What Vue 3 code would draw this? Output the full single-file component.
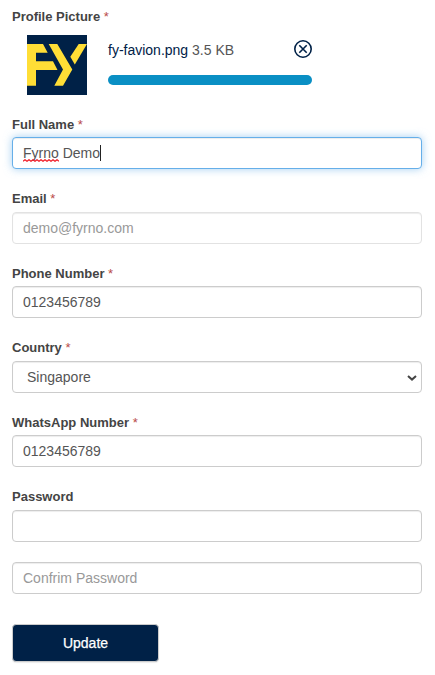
<template>
  <form class="profile" @submit.prevent>
    <label class="label">Profile Picture <span class="required">*</span></label>
    <div class="upload">
      <svg class="thumb" viewBox="0 0 60 60">
        <rect width="60" height="60" fill="#002147" />
        <g fill="#ffde36">
          <path d="M0 9H16L20.7 17.7H9V26.3H26L30.5 35H9V50.7H0Z" />
          <path d="M21.7 9H30.3L45.3 34.5L36 50.7H27.3L36 34.5Z" />
          <path d="M51.7 9H60L47.8 29.5L43.3 21.7Z" />
        </g>
      </svg>
      <div class="file">
        <div class="file-info">
          <p><span class="file-name">{{ file.name }}</span> {{ file.size }}</p>
          <svg class="remove" viewBox="0 0 18 18">
            <circle cx="9" cy="9" r="8.2" />
            <path d="M5.3 5.3L12.7 12.7M12.7 5.3L5.3 12.7" />
          </svg>
        </div>
        <div class="progress">
          <div class="bar" :style="{ width: file.progress + '%' }"></div>
        </div>
      </div>
    </div>

    <div class="group" v-for="field in fields" :key="field.label">
      <label class="label">{{ field.label }} <span class="required" v-if="field.required">*</span></label>
      <div class="control focused" v-if="field.type === 'name'">
        <span><span class="misspelled">Fyrno<svg class="squiggle" width="36" height="3" viewBox="0 0 36 3"><path :d="wave" /></svg></span> Demo</span><i class="caret"></i>
      </div>
      <div class="select" v-else-if="field.type === 'select'">
        <select class="control" v-model="field.value">
          <option>Singapore</option>
        </select>
        <svg class="arrow" viewBox="0 0 10 6"><path d="M1 1L5 4.6L9 1" /></svg>
      </div>
      <input
        v-else
        class="control"
        :type="field.type"
        v-model="field.value"
        :placeholder="field.placeholder"
        :disabled="field.disabled"
      >
    </div>

    <input class="control confirm" type="password" placeholder="Confrim Password">
    <button class="update">Update</button>
  </form>
</template>

<script setup>
import { reactive } from 'vue'

const file = reactive({ name: 'fy-favion.png', size: '3.5 KB', progress: 100 })

const fields = reactive([
  { label: 'Full Name', type: 'name', required: true },
  { label: 'Email', type: 'text', value: '', placeholder: 'demo@fyrno.com', required: true, disabled: true },
  { label: 'Phone Number', type: 'text', value: '0123456789', required: true },
  { label: 'Country', type: 'select', value: 'Singapore', required: true },
  { label: 'WhatsApp Number', type: 'text', value: '0123456789', required: true },
  { label: 'Password', type: 'password', value: '' },
])

// zigzag under a misspelled word
const wave = 'M0 2.3' + 'l2 -1.6l2 1.6'.repeat(9)
</script>

<style>
body {
  background: #fff;
}
</style>

<style scoped>
.profile {
  box-sizing: border-box;
  width: 435px;
  height: 675px;
  padding: 8px 13px 0 12px;
  overflow: hidden;
  font-family: "Liberation Sans", Arial, sans-serif;
  font-size: 14px;
  color: #555;
}

.label {
  display: block;
  height: 17px;
  line-height: 17px;
  font-size: 13px;
  font-weight: bold;
  color: #444;
}

.required {
  font-weight: normal;
  color: #b94a48;
}

.upload {
  display: flex;
  gap: 21px;
  height: 60px;
  margin: 10px 0 20.7px 15px;
}

.thumb {
  width: 60px;
  height: 60px;
}

.file {
  width: 204px;
}

.file-info {
  display: flex;
  justify-content: space-between;
  height: 30px;
  padding-top: 5px;
  box-sizing: border-box;
}

.file-info p {
  margin: 0;
  line-height: 20px;
}

.file-name {
  color: #002147;
}

.remove {
  width: 18px;
  height: 18px;
  fill: none;
  stroke: #002147;
  stroke-width: 1.6;
}

.progress {
  height: 10px;
  margin-top: 10px;
}

.bar {
  height: 10px;
  border-radius: 5px;
  background: #0a8fc4;
}

.group {
  height: 74.5px;
}

.group .control {
  margin-top: 4.5px;
}

.control {
  display: block;
  box-sizing: border-box;
  width: 410px;
  height: 32px;
  padding: 0 10px;
  border: 1px solid #ccc;
  border-radius: 4px;
  outline: none;
  background: #fff;
  box-shadow: inset 0 1px 1px rgba(0, 0, 0, 0.075);
  font: 14px "Liberation Sans", Arial, sans-serif;
  color: #555;
}

.control::placeholder {
  color: #999;
  opacity: 1;
}

.control:disabled {
  border-color: #e2e2e2;
}

.focused {
  display: flex;
  align-items: center;
  border-color: #66afe9;
  box-shadow: inset 0 1px 1px rgba(0, 0, 0, 0.075), 0 0 8px rgba(102, 175, 233, 0.6);
}

.misspelled {
  position: relative;
}

.squiggle {
  position: absolute;
  left: 0;
  bottom: -1px;
  fill: none;
  stroke: #f0202c;
  stroke-width: 1.2;
}

.caret {
  width: 1px;
  height: 16px;
  background: #222;
}

.select {
  position: relative;
}

.select .control {
  appearance: none;
  padding-left: 14px;
}

.arrow {
  position: absolute;
  top: 14px;
  right: 5px;
  width: 10px;
  height: 6px;
  fill: none;
  stroke: #444;
  stroke-width: 2;
}

.confirm {
  margin-top: -0.7px;
}

.update {
  display: block;
  box-sizing: border-box;
  width: 147px;
  height: 38px;
  margin-top: 30px;
  padding: 0;
  border: 1px solid #ccc;
  border-radius: 4px;
  background: #002147;
  box-shadow: 0 1px 1px rgba(0, 0, 0, 0.08);
  font: 14px "Liberation Sans", Arial, sans-serif;
  color: #fff;
  -webkit-text-stroke: 0.25px #fff;
}
</style>
